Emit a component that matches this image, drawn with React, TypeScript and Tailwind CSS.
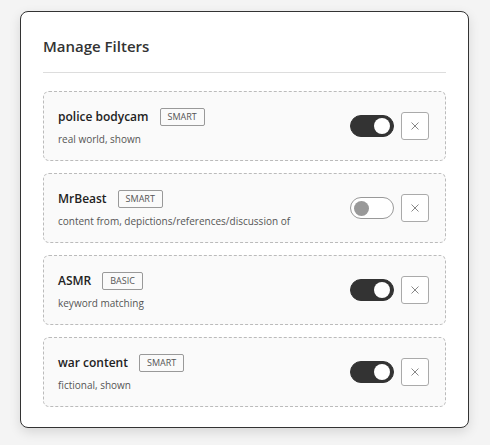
import React, { useState } from 'react';

type Filter = {
  id: number;
  name: string;
  kind: 'SMART' | 'BASIC';
  desc: string;
  enabled: boolean;
};

const INITIAL: Filter[] = [
  { id: 1, name: 'police bodycam', kind: 'SMART', desc: 'real world, shown', enabled: true },
  { id: 2, name: 'MrBeast', kind: 'SMART', desc: 'content from, depictions/references/discussion of', enabled: false },
  { id: 3, name: 'ASMR', kind: 'BASIC', desc: 'keyword matching', enabled: true },
  { id: 4, name: 'war content', kind: 'SMART', desc: 'fictional, shown', enabled: true },
];

const Toggle: React.FC<{ on: boolean; onClick: () => void }> = ({ on, onClick }) => (
  <button
    onClick={onClick}
    className={
      on
        ? 'flex h-[22px] w-[44px] items-center justify-end rounded-full border border-[#333] bg-[#333] px-[3px]'
        : 'flex h-[22px] w-[44px] items-center justify-start rounded-full border border-[#999] bg-white px-[3px]'
    }
  >
    <span className={on ? 'h-[16px] w-[16px] rounded-full bg-white' : 'h-[15px] w-[15px] rounded-full bg-[#999]'} />
  </button>
);

const App: React.FC = () => {
  const [filters, setFilters] = useState<Filter[]>(INITIAL);

  const toggle = (id: number) =>
    setFilters(fs => fs.map(f => (f.id === id ? { ...f, enabled: !f.enabled } : f)));

  return (
    <div className="min-h-screen bg-[#f4f4f4] px-5 pt-[11px] font-['Open_Sans',sans-serif]">
      <div className="w-[449px] rounded-lg border border-[#333] bg-white px-[22px] pb-5 pt-[22px] shadow-[0_4px_12px_rgba(0,0,0,0.12)]">
        <h2 className="text-[15px] font-semibold leading-[24px] text-[#333]">Manage Filters</h2>
        <div className="mt-[14px] border-t border-[#ddd]" />
        <div className="mt-[18px] flex flex-col gap-3">
          {filters.map(f => (
            <div
              key={f.id}
              className="flex h-[70px] items-center justify-between rounded-md border border-dashed border-[#bbb] bg-[#fafafa] pl-[14px] pr-4"
            >
              <div className="flex flex-col pt-[3px]">
                <div className="flex items-center gap-[11px]">
                  <span className="text-[12px] font-semibold leading-[18px] text-[#222]">{f.name}</span>
                  <span className="rounded-[2px] border border-[#999] px-[7px] text-[9px] leading-[16px] text-[#555]">
                    {f.kind}
                  </span>
                </div>
                <span className="mt-[5px] text-[10px] leading-[16px] text-[#555]">{f.desc}</span>
              </div>
              <div className="flex items-center gap-[7px]">
                <Toggle on={f.enabled} onClick={() => toggle(f.id)} />
                <button
                  onClick={() => setFilters(fs => fs.filter(x => x.id !== f.id))}
                  className="flex h-[28px] w-[28px] items-center justify-center rounded-[3px] border border-[#aaa] bg-white text-[#888]"
                >
                  <svg width="8" height="8" viewBox="0 0 8 8" fill="none" stroke="currentColor" strokeWidth="1">
                    <path d="M0.5 0.5L7.5 7.5M7.5 0.5L0.5 7.5" />
                  </svg>
                </button>
              </div>
            </div>
          ))}
        </div>
      </div>
    </div>
  );
};

export default App;
